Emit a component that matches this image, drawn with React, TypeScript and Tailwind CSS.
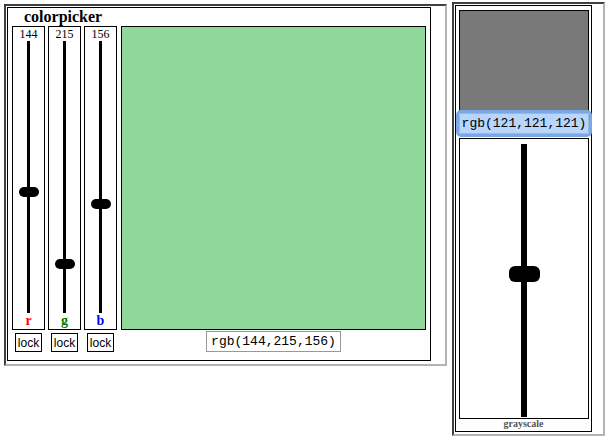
import React from 'react';

interface Channel {
  label: string;
  value: number;
  color: string;
}

const channels: Channel[] = [
  { label: 'r', value: 144, color: 'text-[#ff0000]' },
  { label: 'g', value: 215, color: 'text-[#008000]' },
  { label: 'b', value: 156, color: 'text-[#0000ff]' },
];

const serif = "font-['Liberation_Serif',serif]";
const mono = "font-['Liberation_Mono',monospace]";

const ChannelSlider: React.FC<{ channel: Channel }> = ({ channel }) => (
  <div className="flex flex-col items-center">
    <div className="flex h-[304px] w-[33px] flex-col items-center border border-black">
      <div className={`${serif} h-[14px] text-[12px] leading-[14px] text-black`}>{channel.value}</div>
      <div className="relative flex h-[272px] w-[20px] justify-center">
        <div className="h-full w-[3px] bg-black" />
        <div
          className="absolute left-0 h-[10px] w-[20px] rounded-full bg-black"
          style={{ top: Math.round(0.5 + channel.value * 1.012) }}
        />
      </div>
      <div className={`${serif} h-[16px] text-[14px] font-bold leading-[16px] ${channel.color}`}>
        {channel.label}
      </div>
    </div>
    <div className="mt-[3px] flex h-[19px] w-[27px] items-center justify-center border border-black font-['Liberation_Sans',sans-serif] text-[12px] leading-none text-black">
      lock
    </div>
  </div>
);

const App: React.FC = () => {
  return (
    <div className="flex items-start bg-white">
      {/* color picker panel */}
      <div className="ml-[4px] mt-[4px] h-[362px] w-[443px] border-2 border-b-[#b3b3b3] border-l-[#404040] border-r-[#b3b3b3] border-t-[#404040] p-px">
        <div className="h-[354px] w-[424px] border border-black">
          <div className={`${serif} h-[18px] pl-[16px] text-[16px] font-bold leading-[18px] text-black`}>
            colorpicker
          </div>
          <div className="flex items-start pl-[4px]">
            <div className="flex gap-[3px]">
              {channels.map((c) => (
                <ChannelSlider key={c.label} channel={c} />
              ))}
            </div>
            <div className="ml-[4px] flex flex-col items-center">
              <div className="h-[304px] w-[305px] border border-black bg-[#90d79c]" />
              <div
                className={`${mono} mt-px flex h-[21px] w-[135px] items-center justify-center border border-[#999999] text-[13px] text-black`}
              >
                rgb(144,215,156)
              </div>
            </div>
          </div>
        </div>
      </div>

      {/* grayscale panel */}
      <div className="ml-[5px] mt-[2px] h-[434px] w-[153px] border-2 border-b-[#b3b3b3] border-l-[#404040] border-r-[#b3b3b3] border-t-[#404040] p-px">
        <div className="h-[427px] w-[137px] border border-black pt-[4px]">
          <div className="ml-[3px] h-[101px] w-[130px] border border-black bg-[#797979]" />
          <div
            className={`${mono} ml-[3px] mt-[2px] flex h-[21px] w-[130px] items-center justify-center rounded-[2px] border border-[#9ab8e0] bg-[#b8d6fb] text-[13px] text-black outline-3 outline-[#7aa8e4]`}
          >
            rgb(121,121,121)
          </div>
          <div className="ml-[3px] mt-[4px] flex h-[281px] w-[130px] justify-center border border-black pt-[5px]">
            <div className="relative flex h-[273px] w-[31px] justify-center">
              <div className="h-full w-[6px] bg-black" />
              <div className="absolute left-0 top-[122px] h-[16px] w-[31px] rounded-[6px] bg-black" />
            </div>
          </div>
          <div className={`${serif} h-[10px] text-center text-[10px] font-bold leading-[10px] text-[#555555]`}>
            grayscale
          </div>
        </div>
      </div>
    </div>
  );
};

export default App;
